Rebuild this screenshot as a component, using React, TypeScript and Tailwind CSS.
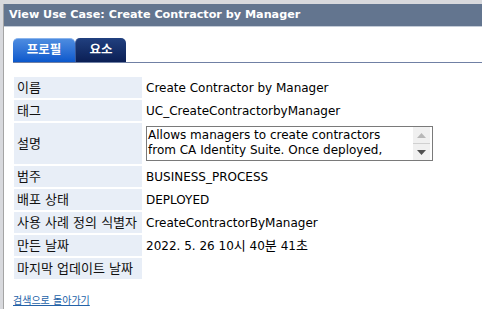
import type { ReactNode } from "react";

const ko = "font-['DejaVu_Sans','Noto_Sans_CJK_KR',sans-serif]";

// korean bits inside the date read a bit larger than the latin digits
const K = ({ children }: { children: ReactNode }) => <span className="text-[13px]">{children}</span>;

const rows: { label: string; value: ReactNode; tall?: boolean }[] = [
  { label: "이름", value: "Create Contractor by Manager" },
  { label: "태그", value: "UC_CreateContractorbyManager" },
  { label: "설명", value: "", tall: true },
  { label: "범주", value: "BUSINESS_PROCESS" },
  { label: "배포 상태", value: "DEPLOYED" },
  { label: "사용 사례 정의 식별자", value: "CreateContractorByManager" },
  {
    label: "만든 날짜",
    value: (
      <>
        2022. 5. 26 10<K>시</K> 40<K>분</K> 41<K>초</K>
      </>
    ),
  },
  { label: "마지막 업데이트 날짜", value: "" },
];

function DescBox() {
  return (
    <div className="flex w-[287px] h-[35px] border border-[#7a7a7a] bg-white">
      <div className="flex-1 overflow-hidden pl-[1px] pt-[1px] text-[12px] leading-[15px] text-black">
        Allows managers to create contractors
        <br />
        from CA Identity Suite. Once deployed,
      </div>
      <div className="w-[17px] mr-[2px] flex flex-col bg-[#f0f0f0]">
        <div className="flex-1 flex items-center justify-center border-b border-[#d0d0d0]">
          <svg width="9" height="5" viewBox="0 0 9 5">
            <path d="M0 5 L4.5 0 L9 5 Z" fill="#b8b8b8" />
          </svg>
        </div>
        <div className="flex-1 flex items-center justify-center">
          <svg width="9" height="5" viewBox="0 0 9 5">
            <path d="M0 0 L9 0 L4.5 5 Z" fill="#505050" />
          </svg>
        </div>
      </div>
    </div>
  );
}

export default function App() {
  return (
    <div className={`w-[482px] h-[309px] bg-[#d8d9dd] pt-[4px] pl-[3px] overflow-hidden ${ko}`}>
      <div className="h-full border-l border-[#a4a4a4] bg-white">
        <div className="h-[23px] bg-[#63758f] border-b border-[#c4ccd8] pl-[5px] flex items-center text-white font-bold text-[11.2px]">
          View Use Case: Create Contractor by Manager
        </div>

        <div className="mt-[11px] ml-[9px] flex items-end border-b border-[#7080a4]">
          <div className="w-[62px] h-[24px] rounded-t-[5px] bg-gradient-to-b from-[#4d8ce0] to-[#0a58cc] border-t border-[#8ab4ec] text-white font-bold text-[12.5px] flex items-center justify-center">
            프로필
          </div>
          <div className="w-[51px] h-[24px] rounded-t-[5px] bg-gradient-to-b from-[#21407f] to-[#0b1f55] border-l border-[#3a5a9a] text-white font-bold text-[12.5px] flex items-center justify-center">
            요소
          </div>
        </div>

        <table className="ml-[8px] mt-[12px] border-separate border-spacing-[2px]">
          <tbody>
            {rows.map((r) => (
              <tr key={r.label} className={r.tall ? "h-[41px]" : "h-[21px]"}>
                <td className="w-[128px] bg-[#e8eef7] pl-[3px] text-[13px] leading-[16px] text-[#111] whitespace-nowrap align-middle">
                  {r.label}
                </td>
                <td className="pl-[2px] text-[12px] leading-[16px] text-black whitespace-nowrap align-middle">
                  {r.tall ? <DescBox /> : r.value}
                </td>
              </tr>
            ))}
          </tbody>
        </table>

        <a href="#" className="block ml-[9px] mt-[12px] text-[10px] text-[#2462a8] underline w-fit">
          검색으로 돌아가기
        </a>
      </div>
    </div>
  );
}
